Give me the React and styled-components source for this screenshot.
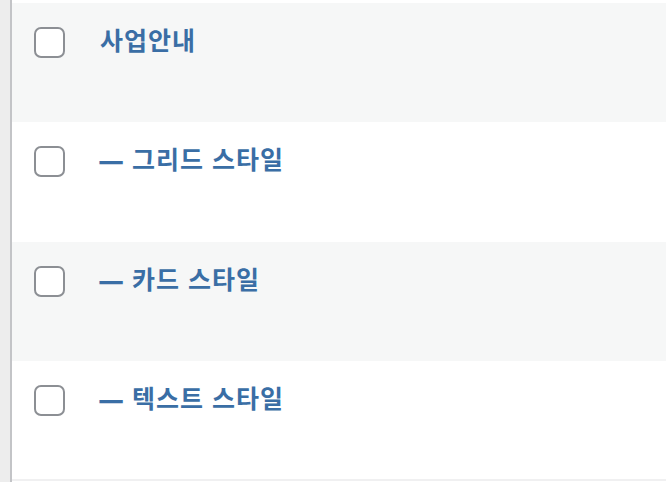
import React from "react"
import styled, { createGlobalStyle } from "styled-components"

const GlobalStyle = createGlobalStyle`
  html, body {
    margin: 0;
    padding: 0;
    background: #fff;
  }
  body {
    font-family: "Noto Sans CJK KR", "Noto Sans", sans-serif;
  }
`

const Screen = styled.div`
  display: flex;
  width: 666px;
  height: 482px;
  overflow: hidden;
`

const Gutter = styled.div`
  width: 10px;
  flex-shrink: 0;
  background: #ededed;
  border-right: 2px solid #c3c4c7;
`

const Table = styled.div`
  flex: 1;
  padding-top: 3px;
  display: flex;
  flex-direction: column;
`

const Row = styled.div`
  display: flex;
  align-items: flex-start;
  height: 119.25px;
  box-sizing: border-box;
  padding: 24px 0 0 22px;
  background: ${(p) => (p.$alt ? "#f6f7f7" : "#fff")};
  &:last-child {
    border-bottom: 2px solid #f0f0f1;
    height: 120.25px;
  }
`

const Checkbox = styled.span`
  width: 31px;
  height: 31px;
  box-sizing: border-box;
  border: 2px solid #8c8f94;
  border-radius: 7px;
  background: #fff;
  flex-shrink: 0;
`

const Title = styled.a`
  margin-left: 35px;
  margin-top: -7px;
  font-size: 25px;
  line-height: 38px;
  font-weight: 700;
  letter-spacing: 1px;
  word-spacing: 1.5px;
  color: #3a6ea5;
  text-decoration: none;
  white-space: nowrap;
`

const Dash = styled.span`
  display: inline-block;
  transform: translateX(-2px) scale(1.15, 1.4);
  transform-origin: left center;
`

const items = [
  { title: "사업안내", depth: 0 },
  { title: "그리드 스타일", depth: 1 },
  { title: "카드 스타일", depth: 1 },
  { title: "텍스트 스타일", depth: 1 },
]

export default function App() {
  return (
    <>
      <GlobalStyle />
      <Screen>
        <Gutter />
        <Table>
          {items.map((item, i) => (
            <Row key={item.title} $alt={i % 2 === 0}>
              <Checkbox />
              <Title href="#">
                {item.depth > 0 && <Dash>—</Dash>}
                {item.depth > 0 && " "}
                {item.title}
              </Title>
            </Row>
          ))}
        </Table>
      </Screen>
    </>
  )
}
